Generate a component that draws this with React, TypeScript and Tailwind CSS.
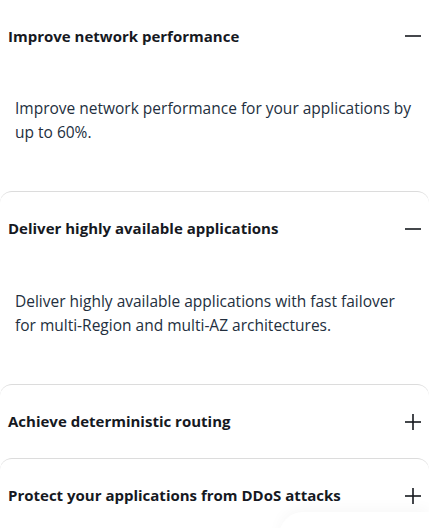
import { useState } from 'react'

const items = [
  {
    title: 'Improve network performance',
    body: 'Improve network performance for your applications by up to 60%.',
  },
  {
    title: 'Deliver highly available applications',
    body: 'Deliver highly available applications with fast failover for multi-Region and multi-AZ architectures.',
  },
  {
    title: 'Achieve deterministic routing',
    body: 'Achieve deterministic routing with static anycast IP addresses.',
  },
  {
    title: 'Protect your applications from DDoS attacks',
    body: 'Protect your applications from DDoS attacks at the edge.',
  },
]

const Icon = ({ open }: { open: boolean }) => (
  <svg width="18" height="18" viewBox="0 0 18 18" fill="none">
    <path d="M1 9H17" stroke="#16191f" strokeWidth="1.6" />
    {!open && <path d="M9 1V17" stroke="#16191f" strokeWidth="1.6" />}
  </svg>
)

export default function App() {
  const [open, setOpen] = useState<number[]>([0, 1])

  const toggle = (i: number) =>
    setOpen((o) => (o.includes(i) ? o.filter((x) => x !== i) : [...o, i]))

  return (
    <div
      className="relative h-[528px] overflow-hidden bg-white text-[#16191f]"
      style={{ fontFamily: '"Open Sans", "Noto Sans", sans-serif' }}
    >
      {items.map((item, i) => {
        const isOpen = open.includes(i)
        return (
          <div
            key={item.title}
            className={i === 0 ? '' : 'rounded-t-xl border-t border-[#dcdcdc]'}
          >
            <button
              onClick={() => toggle(i)}
              className={`flex w-full items-center justify-between pl-2 pr-[7px] text-left ${
                i === 0 ? 'h-[72px]' : 'h-[73px]'
              }`}
            >
              <span className="text-[15px] font-bold">{item.title}</span>
              <Icon open={isOpen} />
            </button>
            {isOpen && (
              <div className="pb-[47px] pl-[15px] pr-3 pt-6">
                <p className="text-[15.5px] leading-6 text-[#232f3e]">{item.body}</p>
              </div>
            )}
          </div>
        )
      })}
      <div className="absolute -bottom-8 right-0 h-12 w-[150px] rounded-tl-3xl bg-white shadow-[0_-4px_14px_rgba(0,0,0,0.03)]" />
    </div>
  )
}
